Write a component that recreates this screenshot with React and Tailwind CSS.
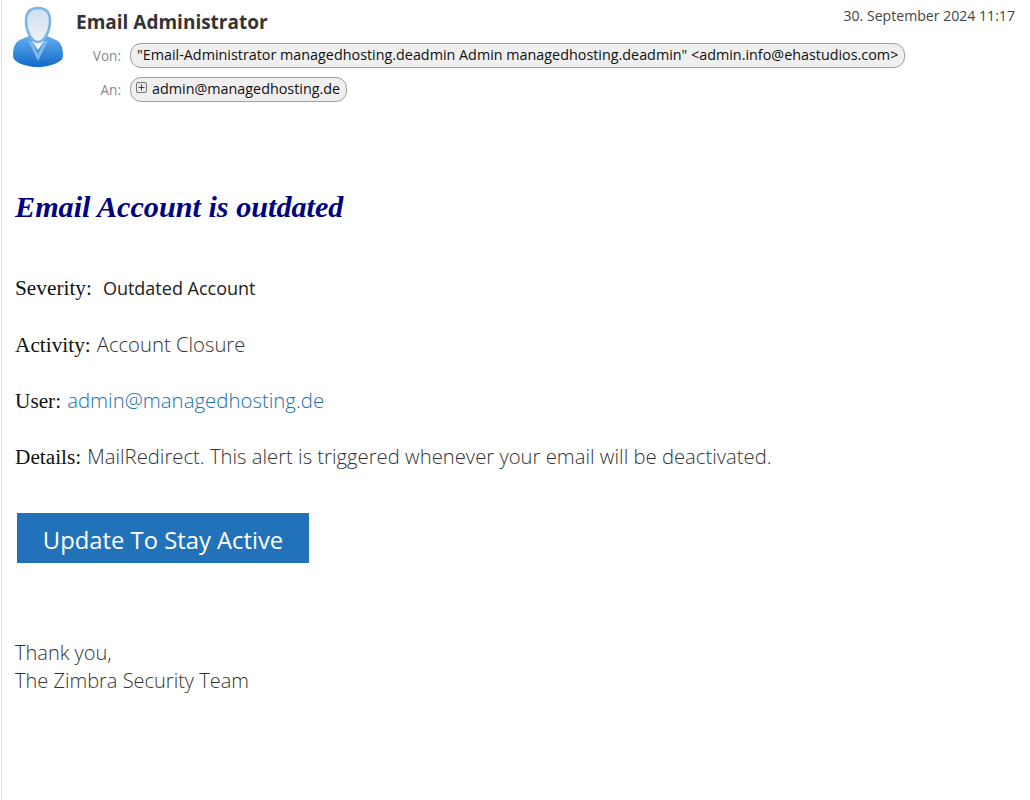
import React from 'react';

const sans = "font-['Open_Sans','Noto_Sans',sans-serif]";

const Avatar = () => (
  <svg width="52" height="62" viewBox="0 0 52 62" className="shrink-0">
    <defs>
      <linearGradient id="body" x1="0" y1="0" x2="0" y2="1">
        <stop offset="0" stopColor="#62aeee" />
        <stop offset="1" stopColor="#1169c9" />
      </linearGradient>
      <linearGradient id="head" x1="0" y1="0" x2="0" y2="1">
        <stop offset="0" stopColor="#cfdeef" />
        <stop offset="1" stopColor="#eef2f7" />
      </linearGradient>
    </defs>
    <path d="M1 49c0-9 3-14 9-16l7-3h18l7 3c6 2 9 7 9 16 0 3-1 5-3 6-6 4-15 6-22 6S9 59 4 55c-2-1-3-3-3-6z" fill="url(#body)" />
    <path d="M16 35h4l6 13 6-13h4l-10 20z" fill="#7db6ea" />
    <path d="M20 35h12l-6 9z" fill="#f6f8fb" />
    <path d="M26 2c-8 0-12 5-12 13 0 9 5 21 12 21s12-12 12-21c0-8-4-13-12-13z" fill="url(#head)" stroke="#7cb2e6" strokeWidth="2.5" />
  </svg>
);

const Pill = ({ children }) => (
  <span className="flex h-[25px] items-center rounded-[11px] border border-[#a0a0a0] bg-[#efefef] px-[6px] pb-[2px] text-[14.35px] text-[#111] whitespace-nowrap">
    {children}
  </span>
);

const Row = ({ label, children }) => (
  <div className="flex items-center">
    <span className="mt-[2px] w-[45px] text-right text-[13.6px] text-[#8a8a8a]">{label}</span>
    <span className="ml-[9px]">{children}</span>
  </div>
);

const Field = ({ label, children }) => (
  <p className="mb-[28.3px] h-[28px] leading-[28px] whitespace-nowrap">
    <span className="font-['Liberation_Serif',serif] text-[21.3px] text-[#111]">{label}</span>
    {children}
  </p>
);

export default function App() {
  return (
    <div className={`ml-px min-h-[800px] border-l border-[#e2e2e2] bg-white ${sans}`}>
      <header className="relative flex pl-[10px] pt-[6px]">
        <Avatar />
        <div className="ml-[12px]">
          <h1 className="h-[33px] text-[19px] font-bold leading-[33px] text-[#333]">Email Administrator</h1>
          <div className="mt-[4px] flex flex-col gap-[9px]">
            <Row label="Von:">
              <Pill>"Email-Administrator managedhosting.deadmin Admin managedhosting.deadmin" &lt;admin.info@ehastudios.com&gt;</Pill>
            </Row>
            <Row label="An:">
              <Pill>
                <svg width="11" height="11" viewBox="0 0 11 11" className="-ml-px mb-[2px] mr-[5px] shrink-0">
                  <rect x="0.5" y="0.5" width="10" height="10" rx="1.5" fill="#e8e8e8" stroke="#777" />
                  <path d="M2.5 5.5h6M5.5 2.5v6" stroke="#444" />
                </svg>
                admin@managedhosting.de
              </Pill>
            </Row>
          </div>
        </div>
        <span className="absolute right-[15px] top-[5px] text-[14.1px] text-[#444]">30. September 2024 11:17</span>
      </header>

      <main className="pl-[13px]">
        <h2 className="mt-[85px] h-[40px] font-['Liberation_Serif',serif] text-[30.2px] font-bold italic leading-[40px] text-[#000080]">
          Email Account is outdated
        </h2>
        <div className="mt-[46.3px] text-[20.25px] font-light text-[#333]">
          <Field label="Severity:">
            <span className="ml-[11px] text-[18px] font-normal text-[#222]">Outdated Account</span>
          </Field>
          <Field label="Activity:">
            <span className="ml-[6px]">Account Closure</span>
          </Field>
          <Field label="User:">
            <span className="ml-[6px] text-[20.4px] text-[#2070b0]">admin@managedhosting.de</span>
          </Field>
          <Field label="Details:">
            <span className="ml-[6px]">MailRedirect. This alert is triggered whenever your email will be deactivated.</span>
          </Field>
        </div>
        <a className="ml-[2px] mt-[43px] flex h-[50px] w-[292px] items-center justify-center bg-[#2172b9] pt-[5px] text-[23.8px] text-white">
          Update To Stay Active
        </a>
        <div className="mt-[76px] text-[20px] font-light leading-[28px] text-[#333]">
          <p>Thank you,</p>
          <p>The Zimbra Security Team</p>
        </div>
      </main>
    </div>
  );
}
